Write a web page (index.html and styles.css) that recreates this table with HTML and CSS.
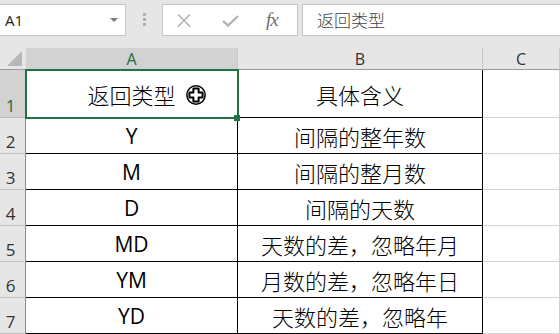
FILE: index.html
```html
<!DOCTYPE html>
<html lang="zh">
<head>
<meta charset="utf-8">
<link rel="stylesheet" href="styles.css">
</head>
<body>
<div class="app">
  <div class="toolbar">
    <div class="namebox"><span class="ref">A1</span><span class="caret"></span></div>
    <div class="grip"><i></i><i></i><i></i></div>
    <div class="fxbox">
      <svg class="btn-x" width="14" height="13" viewBox="0 0 14 13"><path d="M1 0.5 L13 12.5 M13 0.5 L1 12.5" stroke="#b4b4b4" stroke-width="1.6" fill="none"/></svg>
      <svg class="btn-ok" width="17" height="12" viewBox="0 0 17 12"><path d="M1 6 L6 10.5 L16 1" stroke="#b4b4b4" stroke-width="2.4" fill="none"/></svg>
      <span class="fx">fx</span>
    </div>
    <div class="formula">返回类型</div>
  </div>
  <div class="sheet">
    <div class="corner"><span class="tri"></span></div>
    <div class="ch sel">A</div>
    <div class="ch">B</div>
    <div class="ch">C</div>

    <div class="rh sel">1</div>
    <div class="cell">返回类型</div>
    <div class="cell">具体含义</div>
    <div class="cell c"></div>

    <div class="rh">2</div>
    <div class="cell lat">Y</div>
    <div class="cell">间隔的整年数</div>
    <div class="cell c"></div>

    <div class="rh">3</div>
    <div class="cell lat">M</div>
    <div class="cell">间隔的整月数</div>
    <div class="cell c"></div>

    <div class="rh">4</div>
    <div class="cell lat">D</div>
    <div class="cell">间隔的天数</div>
    <div class="cell c"></div>

    <div class="rh">5</div>
    <div class="cell lat">MD</div>
    <div class="cell">天数的差，忽略年月</div>
    <div class="cell c"></div>

    <div class="rh">6</div>
    <div class="cell lat">YM</div>
    <div class="cell">月数的差，忽略年日</div>
    <div class="cell c"></div>

    <div class="rh">7</div>
    <div class="cell lat">YD</div>
    <div class="cell">天数的差，忽略年</div>
    <div class="cell c"></div>

    <div class="selection"></div>
    <div class="handle"></div>
    <svg class="cursor" width="22" height="20" viewBox="0 0 22 20">
      <circle cx="11" cy="10" r="9.2" fill="#fff" stroke="#000" stroke-width="1.5"/>
      <path d="M8.4 3.4 H13.6 V7.4 H17.6 V12.6 H13.6 V16.6 H8.4 V12.6 H4.4 V7.4 H8.4 Z" fill="#fff" stroke="#000" stroke-width="2" stroke-linejoin="round"/>
    </svg>
  </div>
</div>
</body>
</html>
```

FILE: styles.css
```css
* { box-sizing: border-box; }
html, body { margin: 0; padding: 0; }
body {
  width: 560px;
  height: 334px;
  overflow: hidden;
  background: #e6e6e6;
  font-family: "Noto Sans CJK SC", "Noto Sans", sans-serif;
}
.app {
  width: 560px;
  height: 334px;
  display: flex;
  flex-direction: column;
}
.toolbar {
  height: 48px;
  display: flex;
  align-items: flex-start;
  padding-top: 4px;
  flex: none;
}
.namebox {
  width: 126px;
  height: 32px;
  background: #fff;
  border: 1px solid #c6c6c6;
  border-left: none;
  display: flex;
  align-items: center;
  justify-content: space-between;
  padding: 0 7px 0 5px;
}
.ref {
  font-family: "Open Sans", "Noto Sans", sans-serif;
  font-size: 15px;
  color: #222;
}
.caret {
  width: 0;
  height: 0;
  border-left: 4px solid transparent;
  border-right: 4px solid transparent;
  border-top: 4px solid #7a7a7a;
}
.grip {
  margin-left: 17px;
  margin-top: 9px;
  display: flex;
  flex-direction: column;
  gap: 2px;
}
.grip i {
  display: block;
  width: 3px;
  height: 3px;
  background: #b0b0b0;
}
.fxbox {
  margin-left: 16px;
  width: 136px;
  height: 32px;
  background: #fff;
  border: 1px solid #c6c6c6;
  display: flex;
  align-items: center;
  padding-left: 14px;
}
.btn-x { margin-top: 1px; }
.btn-ok { margin-left: 31px; margin-top: 2px; }
.fx {
  margin-left: 27px;
  font-family: "Liberation Serif", serif;
  font-style: italic;
  font-size: 19px;
  color: #6e6e6e;
  letter-spacing: -1px;
}
.formula {
  margin-left: 4px;
  flex: 1;
  height: 32px;
  background: #fff;
  border: 1px solid #c6c6c6;
  border-right: none;
  padding-left: 14px;
  font-size: 17px;
  font-weight: 300;
  line-height: 29px;
  color: #444;
}
.sheet {
  position: relative;
  flex: 1;
  display: grid;
  grid-template-columns: 26px 212px 245px 77px;
  grid-template-rows: 22px 48px repeat(6, 36px);
  background: #fff;
}
.corner {
  background: #e6e6e6;
  border-right: 1px solid #e6e6e6;
  border-bottom: 1px solid #9b9b9b;
  position: relative;
}
.tri {
  position: absolute;
  right: 3px;
  bottom: 3px;
  width: 0;
  height: 0;
  border-left: 15px solid transparent;
  border-bottom: 15px solid #b7b7b7;
}
.ch {
  background: #e6e6e6;
  border-right: 1px solid #c8c8c8;
  border-bottom: 1px solid #9b9b9b;
  display: flex;
  align-items: center;
  justify-content: center;
  font-family: "Open Sans", "Noto Sans", sans-serif;
  font-size: 16px;
  color: #333;
}
.ch.sel {
  background: #d2d2d2;
  color: #1e6b40;
}
.rh {
  background: #e6e6e6;
  border-right: 1px solid #8c8c8c;
  border-bottom: 1px solid #bdbdbd;
  display: flex;
  align-items: flex-end;
  justify-content: center;
  padding: 0 4px 0 0;
  font-family: "Open Sans", "Noto Sans", sans-serif;
  font-size: 17px;
  line-height: 22px;
  color: #333;
}
.rh.sel {
  background: #d2d2d2;
  color: #1e6b40;
}
.cell {
  border-right: 1px solid #000;
  border-bottom: 1px solid #000;
  display: flex;
  align-items: center;
  justify-content: center;
  font-size: 22px;
  font-weight: 300;
  color: #000;
  white-space: nowrap;
}
.cell.lat {
  font-family: "Open Sans", "Noto Sans", sans-serif;
  font-size: 21px;
  font-weight: 400;
}
.cell.c {
  border-right: 1px solid #d0d0d0;
  border-bottom: 1px solid #d4d4d4;
}
.selection {
  position: absolute;
  left: 25px;
  top: 21px;
  width: 214px;
  height: 50px;
  border: 2px solid #217346;
  pointer-events: none;
}
.handle {
  position: absolute;
  left: 234px;
  top: 67px;
  width: 6px;
  height: 6px;
  background: #217346;
}
.cursor {
  position: absolute;
  left: 185px;
  top: 37px;
}
```
